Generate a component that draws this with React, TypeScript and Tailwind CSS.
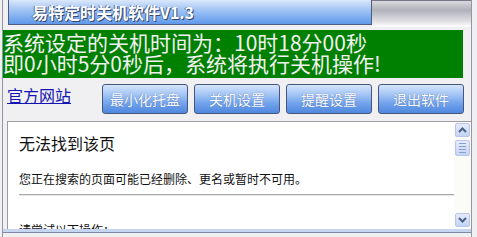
import React from "react";

const cjk = '"Noto Sans CJK SC", "Noto Sans", sans-serif';

function Btn({ label }: { label: string }) {
  return (
    <div className="w-[86px] h-[30px] rounded-[3px] border border-[#47577c] bg-[linear-gradient(to_bottom,#d5e5fc_0%,#a3c4f4_35%,#72a3ec_65%,#5088df_100%)] flex items-center justify-center text-white text-[14px] leading-none [text-shadow:0_0_1px_#3a5a9a]">
      {label}
    </div>
  );
}

function ScrollBtn({ up }: { up: boolean }) {
  return (
    <div className="w-[15px] h-[14px] rounded-[2px] border border-[#b7c6ea] bg-[linear-gradient(to_bottom,#e4ecfc,#c3d3f5)] flex items-center justify-center">
      <svg width="9" height="6" viewBox="0 0 9 6">
        <path
          d={up ? "M1 5 L4.5 1.5 L8 5" : "M1 1 L4.5 4.5 L8 1"}
          fill="none"
          stroke="#4d6185"
          strokeWidth="2"
        />
      </svg>
    </div>
  );
}

export default function App() {
  return (
    <div
      className="w-[477px] h-[237px] bg-[#f0f0f2] overflow-hidden"
      style={{ fontFamily: cjk }}
    >
      <div className="ml-[2px] w-[470px] h-[237px] border-l border-r border-[#9494a4] flex flex-col">
        {/* header */}
        <div className="flex h-[30px] items-start">
          <div className="ml-[5px] w-[364px] h-[25px] border-l border-r border-b border-[#4e5b7e] bg-[linear-gradient(to_bottom,#dbe8fb_0%,#b0cdf6_30%,#80aff0_70%,#6099ea_100%)] flex items-center">
            <span className="ml-[23px] text-white font-bold text-[16px] leading-none [text-shadow:1px_1px_0_#34466e,-1px_0_0_#5070a8]">
              易特定时关机软件V1.3
            </span>
          </div>
          <div className="flex-1 h-[27px] border-t border-[#77778a] bg-[linear-gradient(to_bottom,#d9d9de_0%,#b1b1ba_35%,#dcdce2_75%,#ffffff_100%)]" />
        </div>
        {/* green box */}
        <div className="w-[460px] h-[48px] bg-[#008000] text-[#f2f2f2] text-[21px] leading-[21px] pt-[2px] whitespace-nowrap">
          <div>系统设定的关机时间为：10时18分00秒</div>
          <div>即0小时5分0秒后，系统将执行关机操作!</div>
        </div>
        {/* button row */}
        <div className="flex items-start mt-[6px] h-[30px]">
          <a className="ml-[4px] mt-[1px] text-[16px] leading-[20px] text-[#1414b4] underline w-[95px]">
            官方网站
          </a>
          <div className="flex gap-[6px]">
            <Btn label="最小化托盘" />
            <Btn label="关机设置" />
            <Btn label="提醒设置" />
            <Btn label="退出软件" />
          </div>
        </div>
        {/* content panel */}
        <div className="mt-[7px] ml-[4px] w-[464px] h-[108px] border-t border-l border-[#9c9ca4] bg-white flex overflow-hidden">
          <div className="flex-1 pl-[11px] overflow-hidden">
            <div className="mt-[12px] text-[16px] leading-[18px] text-[#111]">无法找到该页</div>
            <div className="mt-[20px] text-[12px] leading-[14px] text-[#111] whitespace-nowrap">
              您正在搜索的页面可能已经删除、更名或暂时不可用。
            </div>
            <div className="mt-[8px] h-[2px] border-t border-[#a8a8a8] border-b-[#e8e8e8] border-b" />
            <div className="mt-[27px] text-[12px] leading-[14px] text-[#111]">请尝试以下操作：</div>
          </div>
          <div className="w-[17px] flex flex-col items-center bg-[#fbfbf8] pt-[1px] pb-[2px]">
            <ScrollBtn up />
            <div className="mt-[3px] w-[15px] h-[16px] rounded-[2px] border border-[#b7c6ea] bg-[linear-gradient(to_bottom,#e4ecfc,#c6d5f6)] flex flex-col items-center justify-center gap-[2px]">
              <div className="w-[7px] h-[1px] bg-[#8c9fcf]" />
              <div className="w-[7px] h-[1px] bg-[#8c9fcf]" />
              <div className="w-[7px] h-[1px] bg-[#8c9fcf]" />
              <div className="w-[7px] h-[1px] bg-[#8c9fcf]" />
            </div>
            <div className="flex-1" />
            <ScrollBtn up={false} />
          </div>
        </div>
        <div className="h-[3px] bg-[#c6d6f0]" />
        <div className="h-[1px] bg-[#7d8aa8]" />
      </div>
    </div>
  );
}
